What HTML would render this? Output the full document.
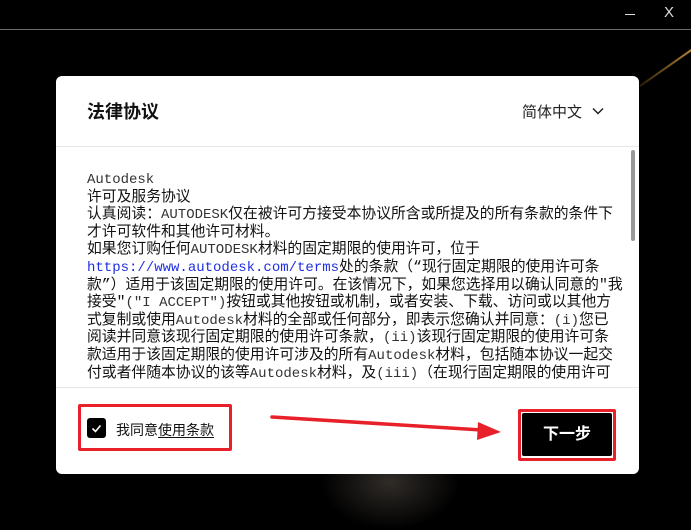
<!DOCTYPE html>
<html><head><meta charset="utf-8"><style>
*{margin:0;padding:0;box-sizing:border-box}
html,body{width:691px;height:517px}
body{background:#000;position:relative;overflow:hidden;font-family:"Liberation Sans","Noto Sans CJK SC",sans-serif}
.topline{position:absolute;left:0;top:29px;width:691px;height:1px;background:#6a6a6a}
.min{position:absolute;left:625px;top:14px;width:10px;height:1px;background:#ddd}
.x{position:absolute;left:664px;top:4px;color:#ddd;font-size:15px;font-family:"Liberation Sans",sans-serif}
.streak{position:absolute;left:640px;top:85px;width:80px;height:2px;background:linear-gradient(90deg,rgba(200,140,40,.2),#d9a040);transform:rotate(-35deg);transform-origin:left}
.glow{position:absolute;left:320px;top:470px;width:140px;height:60px;background:radial-gradient(ellipse at 50% 20%,rgba(120,110,100,.4),rgba(0,0,0,0) 70%)}
.dlg{position:absolute;left:56px;top:76px;width:583px;height:398px;background:#fff;border-radius:6px}
.title{position:absolute;left:31px;top:22px;font-size:18px;font-weight:bold;color:#111}
.lang{position:absolute;left:466px;top:25px;font-size:15px;color:#222}
.hl{position:absolute;left:0;top:70px;width:583px;height:1px;background:#e6e6e6}
.fl{position:absolute;left:0;top:311px;width:583px;height:1px;background:#e6e6e6}
.txt{position:absolute;left:31px;top:96px;width:540px;height:213px;overflow:hidden;font-size:14.8px;line-height:17.6px;color:#111;font-family:"Liberation Mono","Noto Sans CJK SC",monospace;white-space:nowrap}
.txt .m{color:#333;font-size:14px}
.txt a{color:#2030e0;text-decoration:none;font-size:14px}
.sb{position:absolute;left:575px;top:74px;width:4px;height:91px;background:#999;border-radius:2px}
.rb{position:absolute;border:3px solid #e8202a;border-radius:2px}
.cb{position:absolute;left:31px;top:342px;width:19px;height:20px;background:#000;border-radius:3px}
.agree{position:absolute;left:60px;top:344px;font-size:14px;color:#111}
.agree u{text-underline-offset:2px}
.btn{position:absolute;left:466px;top:337px;width:90px;height:43px;background:#000;border-radius:2px;color:#fff;font-size:16px;font-weight:bold;text-align:center;line-height:43px}
</style></head><body>
<div class="topline"></div><div class="min"></div><div class="x">X</div>
<div class="streak"></div><div class="glow"></div>
<div class="dlg">
<div class="title">法律协议</div>
<div class="lang">简体中文 <svg width="12" height="8" style="margin-left:6px;vertical-align:2px"><path d="M1 1.5l5 5 5-5" fill="none" stroke="#222" stroke-width="1.5"/></svg></div>
<div class="hl"></div>
<div class="txt"><span class="m">Autodesk</span><br>许可及服务协议<br>认真阅读：<span class="m">AUTODESK</span>仅在被许可方接受本协议所含或所提及的所有条款的条件下<br>才许可软件和其他许可材料。<br>如果您订购任何<span class="m">AUTODESK</span>材料的固定期限的使用许可，位于<br><a>https://www.autodesk.com/terms</a>处的条款（“现行固定期限的使用许可条<br>款”）适用于该固定期限的使用许可。在该情况下，如果您选择用以确认同意的"我<br>接受"<span class="m">("I ACCEPT")</span>按钮或其他按钮或机制，或者安装、下载、访问或以其他方<br>式复制或使用<span class="m">Autodesk</span>材料的全部或任何部分，即表示您确认并同意：<span class="m">(i)</span>您已<br>阅读并同意该现行固定期限的使用许可条款，<span class="m">(ii)</span>该现行固定期限的使用许可条<br>款适用于该固定期限的使用许可涉及的所有<span class="m">Autodesk</span>材料，包括随本协议一起交<br>付或者伴随本协议的该等<span class="m">Autodesk</span>材料，及<span class="m">(iii)</span>（在现行固定期限的使用许可</div>
<div class="sb"></div>
<div class="fl"></div>
<div class="cb"><svg width="19" height="20"><path d="M5.5 10.5l3 3 5-6" fill="none" stroke="#fff" stroke-width="1.6"/></svg></div>
<div class="agree">我同意<u>使用条款</u></div>
<div class="btn">下一步</div>
</div>
<div class="rb" style="left:78px;top:404px;width:154px;height:47px"></div>
<div class="rb" style="left:518px;top:409px;width:98px;height:52px"></div>
<svg style="position:absolute;left:0;top:0" width="691" height="517"><path d="M272 417L482 430" stroke="#e8202a" stroke-width="3.5" stroke-linecap="round"/><path d="M478 422L501 432L477 440Z" fill="#e8202a"/></svg>
</body></html>
